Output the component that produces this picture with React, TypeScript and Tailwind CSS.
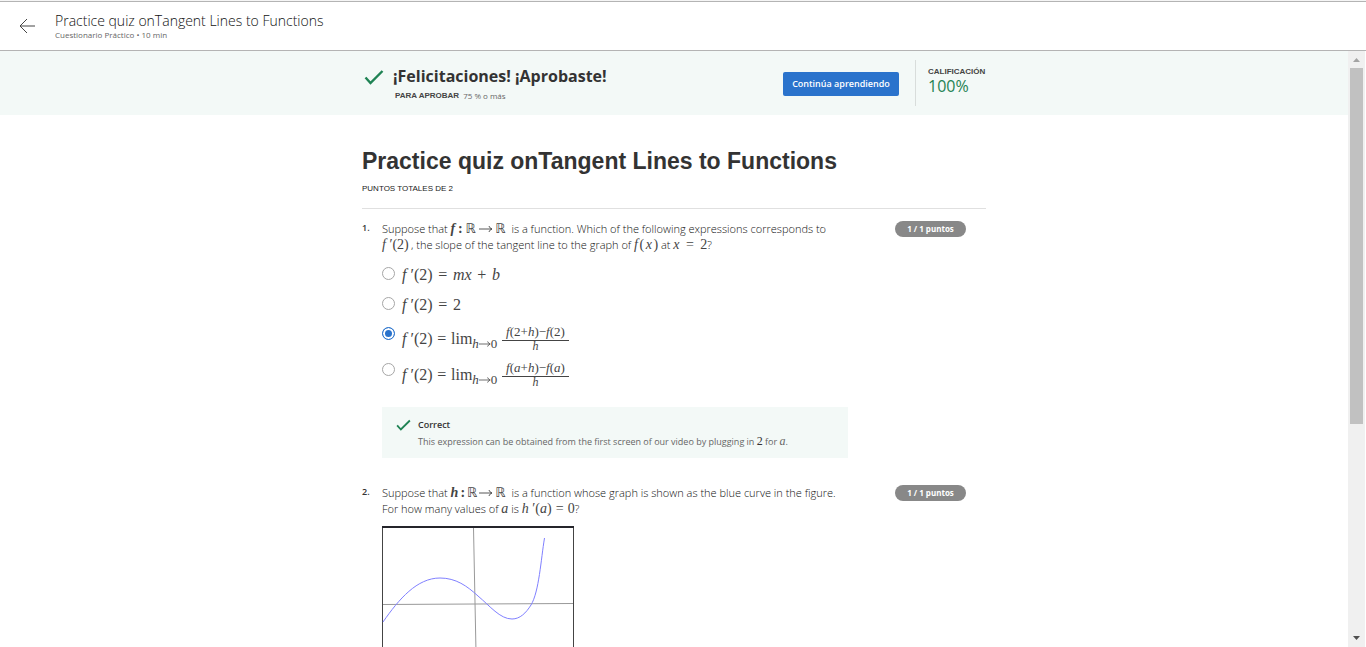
import type { ReactNode } from "react";

function Sym({ children }: { children: ReactNode }) {
  return <i className="italic">{children}</i>;
}

function Reals() {
  return <span className="font-['DejaVu_Sans'] text-[13px]">ℝ</span>;
}

function Arrow({ className }: { className: string }) {
  return (
    <svg viewBox="0 0 14 8" className={className} fill="none" stroke="currentColor" aria-label="to">
      <path d="M0 4h13M10 1c.5 1.500 1.500 2.500 3 3c-1.500 .5-2.500 1.500-3 3" strokeWidth="0.9" />
    </svg>
  );
}

function InlineMath({ width, children }: { width: string; children: ReactNode }) {
  return (
    <span
      className={`inline-flex items-baseline justify-between whitespace-nowrap align-baseline font-['Liberation_Serif',serif] text-sm font-normal leading-[10px] text-[#444] ${width}`}
    >
      {children}
    </span>
  );
}

function Mapping({ name }: { name: string }) {
  return (
    <span className="mr-[3px]">
      <InlineMath width="w-[55px]">
        <b>
          <Sym>{name}</Sym>
        </b>
        <b>:</b>
        <Reals />
        <Arrow className="h-2 w-3.5 self-center" />
        <Reals />
      </InlineMath>
    </span>
  );
}

function Check({ className }: { className: string }) {
  return (
    <svg viewBox="0 0 20 16" className={className} fill="none" stroke="#1f8354" strokeWidth="2.4" aria-hidden="true">
      <path d="M1.500 8.500L6.500 14L18.500 2" />
    </svg>
  );
}

function Derivative() {
  return (
    <span>
      <Sym>f</Sym> ′(2)
    </span>
  );
}

function LimitFormula({ point }: { point: ReactNode }) {
  return (
    <span className="flex w-[167px] items-center justify-between whitespace-nowrap">
      <Derivative />
      <span>=</span>
      <span className="flex items-baseline">
        lim
        <span className="relative top-1 flex items-baseline text-[13px]">
          <Sym>h</Sym>
          <Arrow className="h-2 w-3 self-center" />0
        </span>
      </span>
      <span className="flex w-[67px] flex-col items-center text-[13px] leading-3">
        <span className="flex w-full justify-center border-b border-[#444] pb-0.5">
          <span>
            <Sym>f</Sym>({point}+<Sym>h</Sym>)−<Sym>f</Sym>({point})
          </span>
        </span>
        <span className="text-xs leading-[11px]">
          <Sym>h</Sym>
        </span>
      </span>
    </span>
  );
}

function Option({ id, checked, tall, children }: { id: string; checked?: boolean; tall?: boolean; children: ReactNode }) {
  return (
    <div className={`flex items-start gap-[7px] ${tall ? "h-9" : "h-[30px]"}`}>
      <input
        id={id}
        type="radio"
        name="slope"
        defaultChecked={checked}
        className="mt-2 size-[13px] shrink-0 appearance-none rounded-full border border-[#a6a6a6] bg-white checked:border-[#2a73cc] checked:bg-[#2a73cc] checked:shadow-[inset_0_0_0_2px_white]"
      />
      <label
        htmlFor={id}
        className={`flex items-center font-['Liberation_Serif',serif] text-base text-[#444] ${tall ? "h-10" : "h-8"}`}
      >
        {children}
      </label>
    </div>
  );
}

function Question({ number, prompt, children }: { number: number; prompt: ReactNode; children: ReactNode }) {
  return (
    <li className="flex items-start">
      <span className="w-5 shrink-0 text-[9px] font-semibold leading-[14px] text-[#333]">{number}.</span>
      <div className="w-[466px] shrink-0">
        <div className="whitespace-nowrap text-[11px] font-light leading-4 text-[#111]">{prompt}</div>
        {children}
      </div>
      <span className="ml-[47px] w-[71px] shrink-0 rounded-full bg-[#888] text-center text-[8px] font-bold leading-4 text-white">
        1 / 1 puntos
      </span>
    </li>
  );
}

function Graph() {
  return (
    <svg viewBox="0 0 192 150" className="mt-[9px] h-[150px] w-48" fill="none" role="img" aria-label="Graph of h">
      <path d="M.5 0V150M191.500 0V150" stroke="#444" />
      <path d="M0 1H192" stroke="#25252b" strokeWidth="2" />
      <path d="M1 78.500L191 77.500" stroke="#999" />
      <path d="M91.500 2L94.500 150" stroke="#999" />
      <path
        d="M1 96C17 73 35 52 58 52C74 52 85 60 96 70C108 80 118 93 130 93C138 93 144 87 149 79C157 66 159 33 162.500 12"
        stroke="#8080ff"
      />
    </svg>
  );
}

function Header() {
  return (
    <div className="shrink-0 bg-[#f5f5f5] pt-px">
      <header className="flex h-[50px] items-start border-y border-[#b4b4b4] bg-white pl-[19px]">
        <button type="button" aria-label="Back" className="mt-4 mr-5">
          <svg viewBox="0 0 16 16" className="size-4" fill="none" stroke="#444" strokeWidth="1">
            <path d="M16 8H1M8 1L1 8L8 15" />
          </svg>
        </button>
        <div className="pt-2.5">
          <p className="text-sm font-light leading-[17px] text-[#111]">Practice quiz onTangent Lines to Functions</p>
          <p className="text-[8px] leading-[11px] text-[#666]">Cuestionario Práctico • 10 min</p>
        </div>
      </header>
    </div>
  );
}

function Banner() {
  return (
    <section className="h-16 bg-[#f3f9f7]">
      <div className="mx-auto flex w-full max-w-[624px] items-start">
        <Check className="mt-[18px] ml-0.5 h-4 w-5" />
        <div className="ml-[9px] flex-1 pt-3.5">
          <h2 className="text-base font-bold leading-[22px] text-[#333]">¡Felicitaciones! ¡Aprobaste!</h2>
          <p className="flex gap-1 pl-0.5 text-[8px] leading-[18px] text-[#666]">
            <span className="font-['Liberation_Sans',sans-serif] font-bold text-[#444]">PARA APROBAR</span>
            75 % o más
          </p>
        </div>
        <button type="button" className="mt-[21px] h-6 w-[116px] rounded-xs bg-[#2a73cc] text-[9px] font-semibold text-white">
          Continúa aprendiendo
        </button>
        <div className="mt-[9px] ml-4 h-[46px] w-[71px] whitespace-nowrap border-l border-[#d8dddb] pt-1.5 pl-3">
          <p className="font-['Liberation_Sans',sans-serif] text-[8px] font-bold leading-[11px] text-[#444]">CALIFICACIÓN</p>
          <p className="text-base leading-[19px] text-[#1f8354]">100%</p>
        </div>
      </div>
    </section>
  );
}

function Scrollbar() {
  return (
    <div aria-hidden="true" className="mr-px flex w-[17px] shrink-0 flex-col items-center bg-[#f0f0f0]">
      <svg viewBox="0 0 17 17" className="size-[17px]">
        <path d="M5 11L8.500 7L12 11z" fill="#a3a3a3" />
      </svg>
      <div className="w-[13px] basis-[356px] bg-[#c1c1c1]" />
      <svg viewBox="0 0 17 17" className="mt-auto size-[17px]">
        <path d="M5 6L8.500 10L12 6z" fill="#505050" />
      </svg>
    </div>
  );
}

export default function App() {
  return (
    <div className="flex h-screen flex-col overflow-hidden bg-white font-['Open_Sans',sans-serif]">
      <Header />
      <div className="flex min-h-0 flex-1">
        <div className="min-w-0 flex-1 overflow-hidden">
          <Banner />
          <main className="mx-auto w-full max-w-[624px] pt-8">
            <h1 className="font-['Liberation_Sans',sans-serif] text-[23px] font-bold leading-7 text-[#333]">
              Practice quiz onTangent Lines to Functions
            </h1>
            <p className="mt-2 border-b border-[#e0e0e0] pb-3.5 font-['Liberation_Sans',sans-serif] text-[8px] leading-[11px] text-[#222]">
              PUNTOS TOTALES DE 2
            </p>
            <ol className="mt-3 space-y-[27px]">
              <Question
                number={1}
                prompt={
                  <>
                    Suppose that <Mapping name="f" /> is a function. Which of the following expressions corresponds to
                    <br />
                    <InlineMath width="w-[29px]">
                      <Derivative />
                    </InlineMath>
                    , the slope of the tangent line to the graph of{" "}
                    <InlineMath width="w-[24px]">
                      <Sym>f</Sym>(<Sym>x</Sym>)
                    </InlineMath>{" "}
                    at{" "}
                    <InlineMath width="w-[34px]">
                      <Sym>x</Sym>
                      <span>=</span>
                      <span>2</span>
                    </InlineMath>
                    ?
                  </>
                }
              >
                <div role="radiogroup" aria-label="Slope of the tangent line" className="pt-1.5 pb-4">
                  <Option id="o1">
                    <span className="flex w-[98px] justify-between">
                      <Derivative />
                      <span>=</span>
                      <Sym>mx</Sym>
                      <span>+</span>
                      <Sym>b</Sym>
                    </span>
                  </Option>
                  <Option id="o2">
                    <span className="flex w-[59px] justify-between">
                      <Derivative />
                      <span>=</span>
                      <span>2</span>
                    </span>
                  </Option>
                  <Option id="o3" tall checked>
                    <LimitFormula point="2" />
                  </Option>
                  <Option id="o4" tall>
                    <LimitFormula point={<Sym>a</Sym>} />
                  </Option>
                </div>
                <div className="flex h-[51px] bg-[#f3f9f7] pl-3.5 pt-3">
                  <Check className="h-3 w-[15px]" />
                  <div className="ml-[7px] text-[9px]">
                    <p className="font-semibold leading-3 text-[#333]">Correct</p>
                    <p className="mt-[3px] leading-4 text-[#666]">
                      This expression can be obtained from the first screen of our video by plugging in{" "}
                      <span className="font-['Liberation_Serif',serif] text-xs leading-3 text-[#333]">2</span> for{" "}
                      <span className="font-['Liberation_Serif',serif] text-xs leading-3">
                        <Sym>a</Sym>
                      </span>
                      .
                    </p>
                  </div>
                </div>
              </Question>
              <Question
                number={2}
                prompt={
                  <>
                    Suppose that <Mapping name="h" /> is a function whose graph is shown as the blue curve in the figure.
                    <br />
                    For how many values of{" "}
                    <InlineMath width="w-[7px]">
                      <Sym>a</Sym>
                    </InlineMath>{" "}
                    is{" "}
                    <InlineMath width="w-[53px]">
                      <span>
                        <Sym>h</Sym> ′(<Sym>a</Sym>)
                      </span>
                      <span>=</span>
                      <span>0</span>
                    </InlineMath>
                    ?
                  </>
                }
              >
                <Graph />
              </Question>
            </ol>
          </main>
        </div>
        <Scrollbar />
      </div>
    </div>
  );
}
